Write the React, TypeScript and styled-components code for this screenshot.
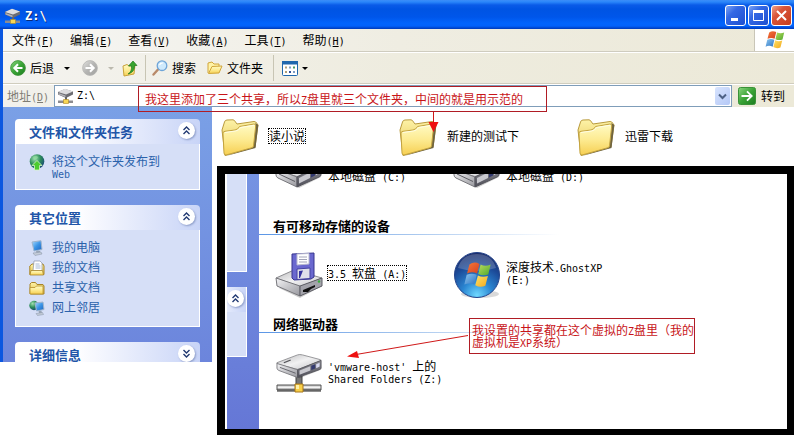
import React from 'react';
import styled, { createGlobalStyle, css } from 'styled-components';

const cjk = `"Noto Sans CJK SC", sans-serif`;

const GlobalStyle = createGlobalStyle`
  * { box-sizing: border-box; }
  body { margin: 0; background: #fff; font: 12px/12px ${cjk}; color: #000; }
  button, input { font: inherit; color: inherit; margin: 0; padding: 0; border: 0; background: none; }
  svg { display: block; flex: none; }
`;

const Latin = styled.span`
  font-family: "DejaVu Sans Mono", monospace;
  font-size: 10px;
  line-height: 0;
  white-space: pre;
`;

const Mixed = ({ children }: { children: string }) => (
  <>
    {children.split(/([\x20-\x7e]+)/).map((part, i) =>
      i % 2 ? <Latin key={i}>{part}</Latin> : part
    )}
  </>
);

const Page = styled.div`
  position: relative;
  min-height: 100vh;
`;

const Explorer = styled.main`
  border-left: 3px solid #0b57e0;
  background: #fff;
`;

const TitleBar = styled.header`
  display: flex;
  align-items: center;
  gap: 4px;
  height: 29px;
  margin-left: -3px;
  padding: 2px 2px 0 4px;
  background: linear-gradient(#3c8df8 0, #2a86fa 2px, #0a5be8 5px, #0054e3 9px, #0056ea 17px, #0264fc 23px, #0262fb 26px, #0046cf 28px, #003bb8 29px);
`;

const Title = styled.h1`
  flex: 1;
  margin: 0;
  color: #fff;
  font: bold 12px/14px "DejaVu Sans Mono", monospace;
  text-shadow: 1px 1px #0a2a7a;
`;

const Captions = styled.div`
  display: flex;
  gap: 2px;
`;

const Caption = styled.button<{ $close?: boolean }>`
  display: grid;
  place-items: center;
  width: 21px;
  height: 21px;
  border: 1px solid #fff;
  border-radius: 3px;
  background: ${p => p.$close
    ? 'linear-gradient(135deg, #f0a48c, #d9553a 35%, #c63c1c)'
    : 'linear-gradient(135deg, #7da4f4, #3468e4 35%, #1d4fd0)'};
`;

const MenuBar = styled.nav`
  display: flex;
  height: 23px;
  border-bottom: 1px solid #cfccbf;
  background: linear-gradient(90deg, #f6f6f4, #efede2 50%, #ece9d8);
`;

const MenuItems = styled.div`
  display: flex;
  flex: 1;
  gap: 16px;
  padding-left: 9px;
`;

const MenuButton = styled.button`
  white-space: nowrap;
`;

const Brand = styled.div`
  display: grid;
  place-items: center;
  width: 40px;
  border-left: 1px solid #c9c6b8;
  background: #fff;
`;

const ToolBar = styled.div`
  display: flex;
  align-items: center;
  height: 32px;
  padding-left: 7px;
  border-top: 1px solid #fff;
  border-bottom: 1px solid #d0cdbe;
  background: linear-gradient(90deg, #f4f3ef, #eeecdf 50%, #ece9d8);
`;

const ToolButton = styled.button<{ $after: number }>`
  display: flex;
  align-items: center;
  gap: 4px;
  margin-right: ${p => p.$after}px;
  white-space: nowrap;
`;

const Caret = styled.span<{ $dim?: boolean; $near?: boolean }>`
  margin-left: ${p => (p.$near ? 0 : 6)}px;
  border: 3px solid transparent;
  border-top-color: ${p => (p.$dim ? '#bbb9ae' : '#000')};
  border-bottom: 0;
`;

const Divider = styled.span<{ $after: number }>`
  width: 1px;
  height: 26px;
  margin-right: ${p => p.$after}px;
  background: #c8c5b4;
`;

const AddressBar = styled.form`
  display: flex;
  align-items: center;
  height: 23px;
  border-top: 1px solid #fff;
  background: linear-gradient(90deg, #f2f1ec, #eeecdf 50%, #ece9d8);
`;

const AddressLabel = styled.label`
  width: 51px;
  padding-left: 4px;
  color: #7e7c74;
  white-space: nowrap;
`;

const AddressBox = styled.div`
  display: flex;
  flex: 1;
  align-items: center;
  gap: 3px;
  height: 22px;
  padding: 0 1px 0 2px;
  border: 1px solid #7f9db9;
  background: #fff;
`;

const AddressInput = styled.input`
  flex: 1;
  min-width: 0;
  outline: 0;
  font-family: "DejaVu Sans Mono", monospace;
  font-size: 10px;
`;

const DropButton = styled.button`
  display: grid;
  place-items: center;
  width: 15px;
  height: 18px;
  border-radius: 2px;
  background: linear-gradient(135deg, #d8e4fe, #b4c8f6);
`;

const GoButton = styled.button`
  display: flex;
  align-items: center;
  gap: 5px;
  padding: 0 9px 0 6px;
  white-space: nowrap;
`;

const Body = styled.div`
  display: grid;
  grid-template-columns: 209px 1fr;
`;

const SideBar = styled.aside`
  display: flex;
  flex-direction: column;
  gap: 15px;
  padding: 12px 12px 0;
  background: linear-gradient(#7aa0e6, #6c85dc);
`;

const Panel = styled.section`
  border-radius: 4px 4px 0 0;
  overflow: hidden;
`;

const PanelHead = styled.header<{ $cut?: boolean }>`
  display: flex;
  justify-content: space-between;
  height: ${p => (p.$cut ? 20 : 25)}px;
  padding: 3px 5px 0 14px;
  background: linear-gradient(90deg, #fff, #fdfdff 35%, #c8d4f7);
`;

const PanelTitle = styled.h2`
  margin: 0;
  color: #2155a8;
  font: bold 13px/19px ${cjk};
`;

const RoundButton = styled.button`
  display: grid;
  place-items: center;
  width: 17px;
  height: 17px;
  border-radius: 50%;
  background: #fff;
  box-shadow: 1px 1px 2px #8c9cc8;
`;

const PanelBody = styled.div`
  display: grid;
  gap: 4px;
  padding: 10px 13px;
  border: 1px solid #fff;
  border-top: 0;
  background: #d6dff7;
`;

const Task = styled.a`
  display: flex;
  align-items: flex-start;
  gap: 7px;
  color: #2b62ab;
  text-decoration: none;
  min-height: 16px;
`;

const TaskText = styled.span`
  padding-top: 1px;
  white-space: pre;
`;

const Files = styled.div`
  display: grid;
  grid-template-columns: repeat(auto-fill, 178px);
  align-content: start;
  padding: 12px 0 0 9px;
`;

const itemBase = css`
  display: flex;
  align-items: center;
  text-align: left;
`;

const FileItem = styled.button`
  ${itemBase}
  gap: 10px;
`;

const ItemLabel = styled.span<{ $focus?: boolean }>`
  margin-bottom: 4px;
  padding: 1px 0;
  outline: ${p => (p.$focus ? '1px dotted #000' : '0')};
  white-space: pre;
`;

const Inset = styled.section`
  position: absolute;
  top: 166px;
  left: 217px;
  right: 0;
  display: grid;
  grid-template-columns: 32px 1fr;
  padding-left: 2px;
  border: 8px solid #000;
  border-width: 8px 7px 6px 8px;
  background: #fff;
  overflow: hidden;
`;

const InsetSide = styled.aside`
  display: grid;
  align-content: start;
  gap: 15px;
  padding-right: 12px;
  background: linear-gradient(#7593e2, #6577d6);
`;

const SideBlock = styled.div<{ $height: number }>`
  height: ${p => p.$height}px;
  border: solid #fff;
  border-width: 0 1px 1px 0;
  background: #d6dff7;
`;

const SideBlockHead = styled.div`
  height: 25px;
  padding-top: 3px;
  border-radius: 0 4px 0 0;
  background: linear-gradient(90deg, #e4eafb, #c8d4f7);
`;

const Drives = styled.div`
  min-height: 255px;
  overflow: hidden;
`;

const DriveRow = styled.div<{ $top: number; $bottom: number; $height: number }>`
  display: grid;
  grid-template-columns: repeat(auto-fill, 178px);
  height: ${p => p.$height}px;
  margin: ${p => p.$top}px 0 ${p => p.$bottom}px;
  padding-left: 16px;
`;

const Drive = styled.button`
  ${itemBase}
  gap: 5px;
`;

const GroupTitle = styled.h3`
  margin: 0;
  padding: 0 14px;
  font: bold 13px/16px ${cjk};
  border-bottom: 1px solid;
  border-image: linear-gradient(90deg, #5b96e6, #a6c6ee 150px, #fff 300px) 1;
`;

const Note = styled.p<{ $x: number; $y: number; $w: number; $pad: string }>`
  position: absolute;
  left: ${p => p.$x}px;
  top: ${p => p.$y}px;
  width: ${p => p.$w}px;
  margin: 0;
  padding: ${p => p.$pad};
  border: 1px solid #b01c24;
  color: #c81418;
  white-space: pre;
  text-spacing-trim: space-all;
`;

const Arrows = styled.svg`
  position: absolute;
  left: 0;
  top: 0;
  pointer-events: none;
`;

const Defs = styled.svg`
  position: absolute;
`;

const Gradient = ({ id, stops, diag }: { id: string; stops: string[]; diag?: boolean }) => (
  <linearGradient id={id} x1="0" y1="0" x2={diag ? '1' : '0'} y2="1">
    {stops.map((c, i) => <stop key={i} offset={i / (stops.length - 1)} stopColor={c} />)}
  </linearGradient>
);

const SharedDefs = () => (
  <Defs width="0" height="0" aria-hidden>
    <defs>
      <Gradient id="folderFront" stops={['#fffbc4', '#fdeb92', '#f6cf52']} />
      <Gradient id="folderBack" stops={['#fdf3a8', '#e3bd45']} />
      <Gradient id="metalTop" diag stops={['#b9b9bb', '#f1f1f2', '#c4c4c8']} />
      <Gradient id="metalFront" diag stops={['#f4f4f6', '#98989e']} />
      <Gradient id="metalSide" stops={['#8f8f96', '#4e4e58']} />
      <Gradient id="greenBtn" diag stops={['#8bd67f', '#3aa336', '#1c7c1f']} />
      <Gradient id="greyBtn" diag stops={['#e2e2e0', '#b4b4b2', '#a2a2a0']} />
      <Gradient id="screen" diag stops={['#a9dcff', '#3b94e6', '#1d62bd']} />
      <Gradient id="pipe" stops={['#b8b8b8', '#f4f4f4', '#6a6a6a']} />
      <Gradient id="winRed" diag stops={['#f4793a', '#d8401f']} />
      <Gradient id="winGreen" diag stops={['#b9dc5c', '#4ea82d']} />
      <Gradient id="winBlue" diag stops={['#8fc7ee', '#2d74c4']} />
      <Gradient id="winYellow" diag stops={['#ffe268', '#f2a91d']} />
      <radialGradient id="orb" cx=".5" cy=".95" r=".95">
        <stop offset="0" stopColor="#6fd8ff" />
        <stop offset=".35" stopColor="#2a86d2" />
        <stop offset=".7" stopColor="#1c4a98" />
        <stop offset="1" stopColor="#1b2a66" />
      </radialGradient>
      <radialGradient id="globe" cx=".35" cy=".3" r=".8">
        <stop offset="0" stopColor="#9fe0b0" />
        <stop offset=".5" stopColor="#2c8c5a" />
        <stop offset="1" stopColor="#173f7c" />
      </radialGradient>
    </defs>
  </Defs>
);

const Folder = () => (
  <svg width="38" height="38" viewBox="0 0 38 38">
    <path d="M1 11 L3.500 3 Q4 1 6 1 L12 .8 Q13.500 1 14.500 3 L16 5 L33 2.500 Q35 2.500 36 4.500 L37 6 L34 28 L4 36.500Z" fill="url(#folderBack)" stroke="#b99a3d" />
    <path d="M34.500 4 L37.300 6 L34.500 29 L5 37 L31 28Z" fill="#6f6440" />
    <path d="M2 14 Q2 12.500 4 12.300 L14 11 Q17 10.500 18.500 7.500 L33 5 Q35 5 34.700 7 L32.500 27 Q32 28.500 31 28.700 L5 36 Q3 36 3 34Z" fill="url(#folderFront)" stroke="#c4a440" />
    <path d="M4 13.500 L14.500 12 Q18 11.500 19.500 8.500 L33 6.300" fill="none" stroke="#fffde4" />
  </svg>
);

const driveBody = (
  <>
    <path d="M4 23 L24 35 L46 24 L46 18 L24 29 L2 16Z" fill="#000" opacity=".2" />
    <path d="M1 15 L22 5 Q24 4 27 5 L45 11 Q47 12 45 13 L24 23 Q22 24 20 23 L2 17 Q0 16 1 15Z" fill="url(#metalTop)" stroke="#8c8c90" />
    <path d="M1 16 L22 24 L22 34 L3 25 Q1 24 1 22Z" fill="url(#metalFront)" stroke="#77777c" />
    <path d="M22 24 L46 12 L46 22 Q46 23 44 24 L22 34Z" fill="url(#metalSide)" stroke="#55555c" />
    <path d="M24 25 L35 19.500 L35 25 L24 30.500Z" fill="#c9c9cf" />
    <path d="M36 19 L40 17 L40 22.500 L36 24.500Z" fill="#333a70" />
    <path d="M41 17 L44.500 15 L44.500 20 L41 22Z" fill="#d8daf2" />
    <path d="M8 15 L15 11.500" stroke="#55555a" strokeWidth="1.500" />
    <path d="M4 21 L20 28.500" stroke="#5b5b62" />
  </>
);

const HardDrive = () => (
  <svg width="48" height="50" viewBox="0 0 48 50">{driveBody}</svg>
);

const NetDrive = () => (
  <svg width="48" height="40" viewBox="0 0 48 40">
    <path d="M21 22h6v11h-6z" fill="#777" stroke="#444" />
    <g transform="translate(1 -3) scale(.98 .78)">{driveBody}</g>
    <path d="M2 31h44v5H2z" fill="url(#pipe)" stroke="#555" />
    <path d="M2 37h44" stroke="#222" />
    <path d="M20 30h8v8h-8z" fill="#f8cf48" stroke="#a8761a" />
    <path d="M21 31h3v4h-3z" fill="#fff1a8" />
  </svg>
);

const FloppyDrive = () => (
  <svg width="48" height="46" viewBox="0 0 48 46">
    <path d="M4 36 L25 46 L47 34 L46 30Z" fill="#000" opacity=".2" />
    <path d="M1 26 L19 18 L47 26 L25 35Z" fill="url(#metalTop)" stroke="#8c8c90" />
    <path d="M1 26 L25 34 L25 44 L2 34Z" fill="url(#metalFront)" stroke="#77777c" />
    <path d="M25 34 L47 26 L47 34 L25 44Z" fill="#a3a3aa" stroke="#5d5d64" />
    <path d="M28 38 L40 33 L40 35 L36 37 L33 40 L28 40Z" fill="#111" />
    <circle cx="44" cy="29.500" r="1.200" fill="#35b13a" />
    <path d="M17 2 L39 1 L39 25 L36 27 L19 28 L17 26Z" fill="#6a68cf" stroke="#37358e" />
    <path d="M22 2 L34 1.500 L34 12 L22 13Z" fill="#fff" stroke="#b9bad0" />
    <path d="M24 5h8M24 7.500h8M24 10h8" stroke="#a3a5b8" />
    <path d="M22 17 L35 16 L35 26.500 L22 27.500Z" fill="#dfe0ea" stroke="#4442a0" />
    <path d="M24 19 L28 18.500 L25 26 L24 26Z" fill="#3533a0" />
  </svg>
);

const flagPanes = (
  <>
    <path d="M5 3 Q9 0 13.500 2.500 L11.500 10.500 Q7.500 8.500 3 10.500Z" fill="url(#winRed)" />
    <path d="M14.500 3 Q18.500 5 23 3 L21 11.500 Q16.500 13 12.500 11Z" fill="url(#winGreen)" />
    <path d="M2.700 11.700 Q7 9.700 11.200 11.700 L9.200 20 Q5 18 .7 20Z" fill="url(#winBlue)" />
    <path d="M12.200 12.300 Q16 14.200 20.700 12.700 L18.500 21 Q14 22.800 10 20.500Z" fill="url(#winYellow)" />
  </>
);

const Flag = () => (
  <svg width="20" height="20" viewBox="0 0 24 24">{flagPanes}</svg>
);

const Orb = () => (
  <svg width="48" height="48" viewBox="0 0 48 48">
    <ellipse cx="27" cy="43" rx="19" ry="4" fill="#000" opacity=".15" />
    <circle cx="24" cy="24" r="22.500" fill="url(#orb)" stroke="#24448c" />
    <path d="M5 17 Q9 3 24 3 T43 17 Q24 23 5 17Z" fill="#fff" opacity=".2" />
    <g transform="translate(10.500 10) scale(1.180)">{flagPanes}</g>
  </svg>
);

const SmallNetDrive = () => (
  <svg width="17" height="16" viewBox="0 0 17 16">
    <path d="M1 4 L8 1 L16 3.500 L16 6.500 L9 10 L1 6.500Z" fill="#6c6c72" />
    <path d="M1 4 L8 .7 L16 3.500 L9 6.500Z" fill="#dedee0" />
    <path d="M1.500 5 L8.500 7.500 V9.300 L1.500 6.500Z" fill="#b3b3b8" />
    <path d="M8 9h2v4H8z" fill="#666" />
    <path d="M1 12.500h15v2.500H1z" fill="#8c8c90" />
    <path d="M6.500 11.500h5v4h-5z" fill="#f8d755" stroke="#b28a22" strokeWidth=".6" />
  </svg>
);

const RoundArrow = ({ dim }: { dim?: boolean }) => (
  <svg width="16" height="16" viewBox="0 0 16 16">
    <circle cx="8" cy="8" r="7.400" fill={dim ? 'url(#greyBtn)' : 'url(#greenBtn)'} stroke={dim ? '#b5b5b2' : '#3b9236'} strokeWidth=".8" />
    <path d={dim ? 'M3.500 8h8M8 4.300 L11.700 8 L8 11.700' : 'M12.500 8h-8M8 4.300 L4.300 8 L8 11.700'} fill="none" stroke="#fff" strokeWidth="2" />
  </svg>
);

const UpFolder = () => (
  <svg width="16" height="17" viewBox="0 0 16 17">
    <path d="M1 6 L5 4.500 L7 6 L13 5 L12 14 L2 16Z" fill="url(#folderFront)" stroke="#c9a33c" />
    <path d="M6 14 Q10 12 9.500 6 H6.500 L11 1 L15 5.500 H12.500 Q13 12 6 14Z" fill="#39a42f" stroke="#1f7a1c" strokeWidth=".7" />
  </svg>
);

const Magnifier = () => (
  <svg width="16" height="16" viewBox="0 0 16 16">
    <path d="M1.500 14.500 L6 9.500" stroke="#b98a6a" strokeWidth="2.400" strokeLinecap="round" />
    <circle cx="10" cy="5.700" r="4.800" fill="#cfeafc" stroke="#6fa5d8" strokeWidth="1.300" />
    <path d="M7.500 5 Q8.500 2.800 11 3" fill="none" stroke="#fff" strokeWidth="1.200" />
  </svg>
);

const OpenFolder = () => (
  <svg width="16" height="16" viewBox="0 0 16 16">
    <path d="M1 13 V3 L5 2 L7 4 L12 4 V7" fill="#fff3a6" stroke="#d1a63a" />
    <path d="M1.500 13.500 L5 6.500 L15 6 L12 13Z" fill="url(#folderFront)" stroke="#d1a63a" />
  </svg>
);

const ViewsIcon = () => (
  <svg width="16" height="15" viewBox="0 0 16 15">
    <rect x=".5" y=".5" width="15" height="14" rx="1" fill="#fff" stroke="#1f67ad" />
    <path d="M0 0h16v3.500H0z" fill="#1f67ad" />
    <path d="M3 5.500h2v2H3zM3 10h2v2H3z" fill="#b0a078" />
    <path d="M7 5.500h2v2H7zM11 10h2v2h-2z" fill="#7d9cc4" />
    <path d="M11 5.500h2v2h-2z" fill="#4a9a60" />
    <path d="M7 10h2v2H7z" fill="#31519c" />
  </svg>
);

const GoIcon = () => (
  <svg width="18" height="18" viewBox="0 0 18 18">
    <rect x=".5" y=".5" width="17" height="17" rx="2" fill="url(#greenBtn)" stroke="#3a9238" />
    <path d="M3.500 9h10M9 4.300 L13.700 9 L9 13.700" fill="none" stroke="#fff" strokeWidth="1.800" />
  </svg>
);

const Chevrons = ({ down }: { down?: boolean }) => (
  <svg width="9" height="9" viewBox="0 0 9 9">
    <path d={down ? 'M1.500 1 L4.500 4 L7.500 1M1.500 5 L4.500 8 L7.500 5' : 'M1.500 4 L4.500 1 L7.500 4M1.500 8 L4.500 5 L7.500 8'}
      fill="none" stroke="#223a72" strokeWidth="1.400" />
  </svg>
);

const WebIcon = () => (
  <svg width="16" height="17" viewBox="0 0 16 17">
    <circle cx="8" cy="7.500" r="7.300" fill="url(#globe)" />
    <path d="M4 3 Q7 1 9 3 Q8 6 5 6Z" fill="#8fdc9c" opacity=".7" />
    <path d="M8 6.500 L13 11.500 H10.500 V16 H5.500 V11.500 H3Z" fill="#4ccc30" stroke="#d8f6c8" strokeWidth=".8" />
  </svg>
);

const ComputerIcon = () => (
  <svg width="16" height="16" viewBox="0 0 16 16">
    <path d="M3 2 L12 .7 L13 9.500 L5 11Z" fill="url(#screen)" stroke="#9fb4cc" />
    <path d="M7 11h4l.5 2h-4z" fill="#9aa6b6" />
    <path d="M4 13 L12 12 L13 14 L6 15.500Z" fill="#c4ccd8" stroke="#8693a6" strokeWidth=".5" />
  </svg>
);

const DocsIcon = () => (
  <svg width="16" height="16" viewBox="0 0 16 16">
    <path d="M.8 14.500 V6 L3 4 H14 L15 6 V14.500Z" fill="url(#folderBack)" stroke="#a98528" />
    <path d="M5 1 H11 L13 3 V11 H4Z" fill="#fff" stroke="#8a94a8" strokeWidth=".7" />
    <path d="M6.500 4h4M6.500 6h5M6.500 8h5" stroke="#8fa8cc" strokeWidth=".8" />
    <path d="M1 15 L2 10.500 H13.500 L14.500 15Z" fill="url(#folderFront)" stroke="#a98528" strokeWidth=".8" />
  </svg>
);

const SharedDocsIcon = () => (
  <svg width="16" height="16" viewBox="0 0 16 16">
    <path d="M1 13.500 V4 L2.500 2.500 H6.500 L8 4.500 H14 L15 6 V14 H1.500Z" fill="url(#folderBack)" stroke="#a98528" />
    <path d="M1 14 V7.500 H6 L7.500 6 H14 V14Z" fill="url(#folderFront)" stroke="#b58f2c" strokeWidth=".8" />
  </svg>
);

const NetworkIcon = () => (
  <svg width="16" height="16" viewBox="0 0 16 16">
    <circle cx="5" cy="5.500" r="4.700" fill="url(#globe)" />
    <path d="M6 3 L14 2 L15 9.500 L7.500 11Z" fill="url(#screen)" stroke="#9fb4cc" />
    <path d="M9.500 11h3l.5 2h-3z" fill="#9aa6b6" />
    <path d="M7 13.500 L13.500 12.500 L14.500 14.500 L8.500 15.500Z" fill="#c4ccd8" stroke="#8693a6" strokeWidth=".5" />
  </svg>
);

const menus = [['文件', 'F'], ['编辑', 'E'], ['查看', 'V'], ['收藏', 'A'], ['工具', 'T'], ['帮助', 'H']];

const places = [
  { label: '我的电脑', Icon: ComputerIcon },
  { label: '我的文档', Icon: DocsIcon },
  { label: '共享文档', Icon: SharedDocsIcon },
  { label: '网上邻居', Icon: NetworkIcon },
];

const folders = ['读小说', '新建的测试下', '迅雷下载'];

const SidePanel = ({ title, children }: { title: string; children?: React.ReactNode }) => (
  <Panel>
    <PanelHead $cut={!children}>
      <PanelTitle>{title}</PanelTitle>
      <RoundButton aria-label={title}><Chevrons down={!children} /></RoundButton>
    </PanelHead>
    {children && <PanelBody>{children}</PanelBody>}
  </Panel>
);

const DriveItem = ({ icon, label, focus }: { icon: React.ReactNode; label: string; focus?: boolean }) => (
  <Drive>
    {icon}
    <ItemLabel $focus={focus}><Mixed>{label}</Mixed></ItemLabel>
  </Drive>
);

export default function App() {
  return (
    <Page>
      <GlobalStyle />
      <SharedDefs />
      <Explorer>
        <TitleBar>
          <SmallNetDrive />
          <Title>Z:\</Title>
          <Captions>
            <Caption aria-label="最小化">
              <svg width="13" height="13"><path d="M2 9h7v3H2z" fill="#fff" /></svg>
            </Caption>
            <Caption aria-label="最大化">
              <svg width="13" height="13"><path d="M1.500 2v9.500h10V2z" fill="none" stroke="#fff" /><path d="M1 1h11v3H1z" fill="#fff" /></svg>
            </Caption>
            <Caption $close aria-label="关闭">
              <svg width="13" height="13"><path d="M2 2l9 9M11 2l-9 9" stroke="#fff" strokeWidth="2" /></svg>
            </Caption>
          </Captions>
        </TitleBar>

        <MenuBar>
          <MenuItems>
            {menus.map(([name, key]) => (
              <MenuButton key={key}>
                {name}<Latin>(<u>{key}</u>)</Latin>
              </MenuButton>
            ))}
          </MenuItems>
          <Brand><Flag /></Brand>
        </MenuBar>

        <ToolBar>
          <ToolButton $after={12}><RoundArrow />后退<Caret /></ToolButton>
          <ToolButton $after={8} aria-label="前进"><RoundArrow dim /><Caret $dim /></ToolButton>
          <ToolButton $after={7} aria-label="向上"><UpFolder /></ToolButton>
          <Divider $after={6} />
          <ToolButton $after={11}><Magnifier />搜索</ToolButton>
          <ToolButton $after={10}><OpenFolder />文件夹</ToolButton>
          <Divider $after={8} />
          <ToolButton $after={0} aria-label="查看"><ViewsIcon /><Caret $near /></ToolButton>
        </ToolBar>

        <AddressBar onSubmit={e => e.preventDefault()}>
          <AddressLabel htmlFor="address">地址<Latin>(<u>D</u>)</Latin></AddressLabel>
          <AddressBox>
            <SmallNetDrive />
            <AddressInput id="address" defaultValue="Z:\" />
            <DropButton type="button" aria-label="地址列表">
              <svg width="9" height="7"><path d="M1 1.500 L4.500 5 L8 1.500" fill="none" stroke="#4d6185" strokeWidth="2" /></svg>
            </DropButton>
          </AddressBox>
          <GoButton><GoIcon />转到</GoButton>
        </AddressBar>

        <Body>
          <SideBar>
            <SidePanel title="文件和文件夹任务">
              <Task href="#web"><WebIcon /><TaskText><Mixed>{'将这个文件夹发布到\nWeb'}</Mixed></TaskText></Task>
            </SidePanel>
            <SidePanel title="其它位置">
              {places.map(({ label, Icon }) => (
                <Task href="#place" key={label}><Icon /><TaskText>{label}</TaskText></Task>
              ))}
            </SidePanel>
            <SidePanel title="详细信息" />
          </SideBar>
          <Files>
            {folders.map((name, i) => (
              <FileItem key={name}>
                <Folder />
                <ItemLabel $focus={i === 0}>{name}</ItemLabel>
              </FileItem>
            ))}
          </Files>
        </Body>
      </Explorer>

      <Inset>
        <InsetSide>
          <SideBlock $height={98} />
          <SideBlock $height={70}>
            <SideBlockHead>
              <RoundButton aria-label="折叠"><Chevrons /></RoundButton>
            </SideBlockHead>
          </SideBlock>
        </InsetSide>
        <Drives>
          <DriveRow $top={-21} $bottom={15} $height={50}>
            <DriveItem icon={<HardDrive />} label="本地磁盘 (C:)" />
            <DriveItem icon={<HardDrive />} label="本地磁盘 (D:)" />
          </DriveRow>
          <GroupTitle>有可移动存储的设备</GroupTitle>
          <DriveRow $top={16} $bottom={17} $height={48}>
            <DriveItem icon={<FloppyDrive />} label="3.5 软盘 (A:)" focus />
            <DriveItem icon={<Orb />} label={'深度技术.GhostXP\n(E:)'} />
          </DriveRow>
          <GroupTitle>网络驱动器</GroupTitle>
          <DriveRow $top={21} $bottom={0} $height={40}>
            <DriveItem icon={<NetDrive />} label={"'vmware-host' 上的\nShared Folders (Z:)"} />
          </DriveRow>
        </Drives>
      </Inset>

      <Note $x={138} $y={86} $w={409} $pad="6px 6px">
        <Mixed>我这里添加了三个共享，所以Z盘里就三个文件夹，中间的就是用示范的</Mixed>
      </Note>
      <Note $x={469} $y={318} $w={226} $pad="5px 0 5px 2px">
        <Mixed>{'我设置的共享都在这个虚拟的Z盘里（我的\n虚拟机是XP系统）'}</Mixed>
      </Note>
      <Arrows width="794" height="435" aria-hidden>
        <path d="M433.500 112v12M468 335.500 L356 354.500" stroke="#d01818" fill="none" />
        <path d="M428.500 122h10l-5 10zM347 356.500l10-5.500 2 7z" fill="#ee1111" />
      </Arrows>
    </Page>
  );
}
